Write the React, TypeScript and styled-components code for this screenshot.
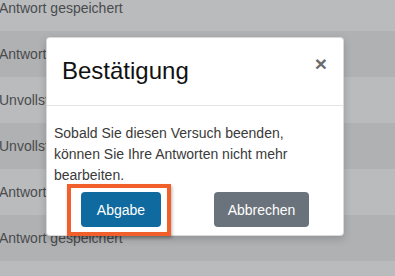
import React from 'react'
import styled, { createGlobalStyle } from 'styled-components'

const GlobalStyle = createGlobalStyle`
	html, body {
		margin: 0;
		padding: 0;
		background: #b9bbbd;
		font-family: "Liberation Sans", Arial, sans-serif;
		overflow: hidden;
	}
`

const Page = styled.div`
	width: 395px;
	height: 276px;
	overflow: hidden;
	position: relative;
`

const List = styled.div`
	display: flex;
	flex-direction: column;
	margin-top: -15px;
`

const Row = styled.div<{ $dark?: boolean }>`
	height: 46px;
	flex: none;
	display: flex;
	align-items: center;
	margin-left: -1px;
	background: ${p => (p.$dark ? '#afb1b3' : '#b9bbbd')};
	color: #4a4b4d;
	font-size: 14px;
	white-space: nowrap;
`

const Modal = styled.div`
	position: absolute;
	left: 46px;
	top: 37px;
	width: 298px;
	box-sizing: border-box;
	background: #fff;
	border: 1px solid rgba(0, 0, 0, 0.15);
	border-radius: 4px;
	box-shadow: 0 3px 8px rgba(0, 0, 0, 0.18);
	display: flex;
	flex-direction: column;
`

const Header = styled.div`
	height: 67px;
	display: flex;
	align-items: center;
	justify-content: space-between;
	padding: 0 16px 0 15px;
	border-bottom: 1px solid #e3e3e3;
`

const Title = styled.h5`
	margin: 0;
	font-size: 24px;
	font-weight: 400;
	line-height: 1.1;
	color: #111;
`

const Close = styled.span`
	align-self: flex-start;
	margin-top: 15px;
	font-size: 21px;
	font-weight: 700;
	line-height: 1;
	color: #6c6c6c;
`

const Body = styled.div`
	padding: 17px 16px 0 7px;
	font-size: 14px;
	line-height: 21px;
	color: #3a3a3a;
`

const Footer = styled.div`
	display: flex;
	justify-content: space-between;
	padding: 6px 34px 8px 34px;
`

const Button = styled.button<{ $variant: 'primary' | 'secondary'; $width: number }>`
	position: relative;
	width: ${p => p.$width}px;
	height: 35px;
	border: none;
	border-radius: 4px;
	font-family: inherit;
	font-size: 14px;
	color: #fff;
	background: ${p => (p.$variant === 'primary' ? '#0f6a9f' : '#6a737b')};
	padding: 0;
`

const Highlight = styled.span`
	position: absolute;
	left: -14px;
	top: -8px;
	right: -10px;
	bottom: -9px;
	border: 4px solid #f15f2a;
	box-shadow: 1px 2px 3px rgba(0, 0, 0, 0.3);
	pointer-events: none;
`

// last row's label sits below the fold, so it stays empty
const rows = [
	'Antwort gespeichert',
	'Antwort gespeichert',
	'Unvollständig',
	'Unvollständig',
	'Antwort gespeichert',
	'Antwort gespeichert',
	'',
]

export default function App() {
	return (
		<Page>
			<GlobalStyle />
			<List>
				{rows.map((text, i) => (
					<Row key={i} $dark={i % 2 === 1}>
						{text}
					</Row>
				))}
			</List>

			<Modal>
				<Header>
					<Title>Bestätigung</Title>
					<Close>×</Close>
				</Header>
				<Body>
					Sobald Sie diesen Versuch beenden, können Sie Ihre Antworten nicht mehr bearbeiten.
				</Body>
				<Footer>
					<Button $variant="primary" $width={80}>
						Abgabe
						<Highlight />
					</Button>
					<Button $variant="secondary" $width={95}>
						Abbrechen
					</Button>
				</Footer>
			</Modal>
		</Page>
	)
}
